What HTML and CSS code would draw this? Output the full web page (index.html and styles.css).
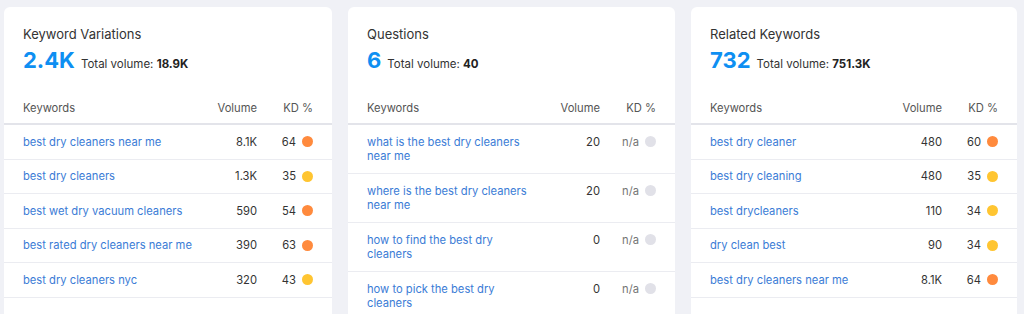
FILE: index.html
```html
<!DOCTYPE html>
<html lang="en">
<head>
<meta charset="utf-8">
<title>Keyword Overview</title>
<link rel="stylesheet" href="styles.css">
</head>
<body>
<main class="board">
  <section class="card">
    <header class="card-head">
      <h2 class="card-title">Keyword Variations</h2>
      <div class="summary"><span class="big">2.4K</span><span class="total">Total volume: <b>18.9K</b></span></div>
    </header>
    <div class="table">
      <div class="row head"><span class="kw">Keywords</span><span class="vol">Volume</span><span class="kd">KD %</span></div>
      <div class="row"><a class="kw" href="#">best dry cleaners near me</a><span class="vol">8.1K</span><span class="kd">64<i class="dot hard"></i></span></div>
      <div class="row"><a class="kw" href="#">best dry cleaners</a><span class="vol">1.3K</span><span class="kd">35<i class="dot mid"></i></span></div>
      <div class="row"><a class="kw" href="#">best wet dry vacuum cleaners</a><span class="vol">590</span><span class="kd">54<i class="dot hard"></i></span></div>
      <div class="row"><a class="kw" href="#">best rated dry cleaners near me</a><span class="vol">390</span><span class="kd">63<i class="dot hard"></i></span></div>
      <div class="row"><a class="kw" href="#">best dry cleaners nyc</a><span class="vol">320</span><span class="kd">43<i class="dot mid"></i></span></div>
    </div>
  </section>

  <section class="card">
    <header class="card-head">
      <h2 class="card-title">Questions</h2>
      <div class="summary"><span class="big">6</span><span class="total">Total volume: <b>40</b></span></div>
    </header>
    <div class="table">
      <div class="row head"><span class="kw">Keywords</span><span class="vol">Volume</span><span class="kd">KD %</span></div>
      <div class="row"><a class="kw" href="#">what is the best dry cleaners near me</a><span class="vol">20</span><span class="kd na">n/a<i class="dot none"></i></span></div>
      <div class="row"><a class="kw" href="#">where is the best dry cleaners near me</a><span class="vol">20</span><span class="kd na">n/a<i class="dot none"></i></span></div>
      <div class="row"><a class="kw" href="#">how to find the best dry cleaners</a><span class="vol">0</span><span class="kd na">n/a<i class="dot none"></i></span></div>
      <div class="row"><a class="kw" href="#">how to pick the best dry cleaners</a><span class="vol">0</span><span class="kd na">n/a<i class="dot none"></i></span></div>
    </div>
  </section>

  <section class="card">
    <header class="card-head">
      <h2 class="card-title">Related Keywords</h2>
      <div class="summary"><span class="big">732</span><span class="total">Total volume: <b>751.3K</b></span></div>
    </header>
    <div class="table">
      <div class="row head"><span class="kw">Keywords</span><span class="vol">Volume</span><span class="kd">KD %</span></div>
      <div class="row"><a class="kw" href="#">best dry cleaner</a><span class="vol">480</span><span class="kd">60<i class="dot hard"></i></span></div>
      <div class="row"><a class="kw" href="#">best dry cleaning</a><span class="vol">480</span><span class="kd">35<i class="dot mid"></i></span></div>
      <div class="row"><a class="kw" href="#">best drycleaners</a><span class="vol">110</span><span class="kd">34<i class="dot mid"></i></span></div>
      <div class="row"><a class="kw" href="#">dry clean best</a><span class="vol">90</span><span class="kd">34<i class="dot mid"></i></span></div>
      <div class="row"><a class="kw" href="#">best dry cleaners near me</a><span class="vol">8.1K</span><span class="kd">64<i class="dot hard"></i></span></div>
    </div>
  </section>
</main>
</body>
</html>
```

FILE: styles.css
```css
* { box-sizing: border-box; }
html, body { margin: 0; height: 100%; }
body {
  background: #f0f1f6;
  font-family: Inter, "Noto Sans", Arial, sans-serif;
  color: #333;
  overflow: hidden;
}
.board {
  display: grid;
  grid-template-columns: 328px 327px 326px;
  column-gap: 16px;
  padding: 7px 6px 0 4px;
  align-items: stretch;
}
.card {
  background: #fff;
  border-radius: 6px;
  padding-bottom: 40px;
}
.card-head {
  padding: 18px 19px 0 19px;
}
.card-title {
  margin: 0;
  font-size: 13px;
  line-height: 19px;
  font-weight: 400;
  color: #333;
}
.summary {
  display: flex;
  align-items: baseline;
  height: 28px;
  margin-top: 2px;
}
.big {
  font-size: 22px;
  line-height: 28px;
  font-weight: 700;
  color: #0e8ff2;
  margin-right: 6px;
}
.total {
  font-size: 11.5px;
  color: #333;
}
.total b { font-weight: 700; color: #222; }
.table {
  margin-top: 27px;
}
.row {
  display: grid;
  grid-template-columns: 173px 1fr 56px;
  align-items: start;
  padding: 9.5px 19px;
  border-bottom: 1px solid #ebecf1;
  font-size: 11.2px;
  line-height: 14.5px;
}
.row.head {
  padding-top: 0;
  padding-bottom: 7.5px;
  border-bottom: 2px solid #e3e4ea;
  color: #555;
}
.kw { color: #3b7cd6; text-decoration: none; }
.row.head .kw { color: #555; }
.vol { text-align: right; }
.kd {
  display: flex;
  justify-content: flex-end;
  align-items: center;
  height: 14.5px;
}
.row.head .kd { display: block; text-align: right; }
.kd.na { color: #757575; }
.dot {
  width: 11px;
  height: 11px;
  border-radius: 50%;
  margin-left: 6px;
  flex: none;
}
.dot.hard { background: #ff8a3d; }
.dot.mid { background: #ffc531; }
.dot.none { background: #e1e1e8; }
```
